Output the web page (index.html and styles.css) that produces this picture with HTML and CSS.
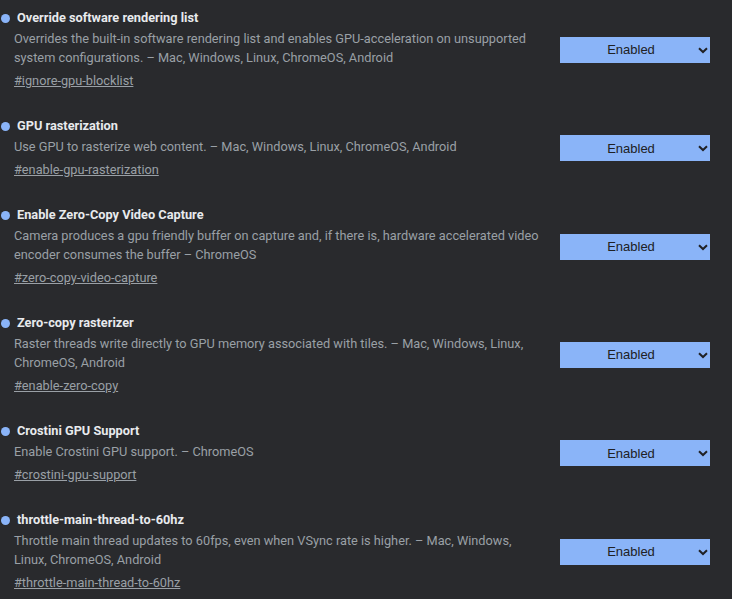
FILE: index.html
```html
<!DOCTYPE html>
<html>
<head>
<meta charset="utf-8">
<link rel="stylesheet" href="styles.css">
</head>
<body>
<div class="list">
  <div class="experiment">
    <div class="info">
      <h3 class="name"><span class="dot"></span>Override software rendering list</h3>
      <p class="desc">Overrides the built-in software rendering list and enables GPU-acceleration on unsupported system configurations. – Mac, Windows, Linux, ChromeOS, Android</p>
      <a class="link" href="#ignore-gpu-blocklist">#ignore-gpu-blocklist</a>
    </div>
    <div class="control"><select class="select"><option>Enabled</option></select><svg class="chev" width="10" height="7" viewBox="0 0 10 7"><path d="M1 1.2 L5 5 L9 1.2" fill="none" stroke="#202124" stroke-width="2"/></svg></div>
  </div>
  <div class="experiment">
    <div class="info">
      <h3 class="name"><span class="dot"></span>GPU rasterization</h3>
      <p class="desc">Use GPU to rasterize web content. – Mac, Windows, Linux, ChromeOS, Android</p>
      <a class="link" href="#enable-gpu-rasterization">#enable-gpu-rasterization</a>
    </div>
    <div class="control"><select class="select"><option>Enabled</option></select><svg class="chev" width="10" height="7" viewBox="0 0 10 7"><path d="M1 1.2 L5 5 L9 1.2" fill="none" stroke="#202124" stroke-width="2"/></svg></div>
  </div>
  <div class="experiment">
    <div class="info">
      <h3 class="name"><span class="dot"></span>Enable Zero-Copy Video Capture</h3>
      <p class="desc">Camera produces a gpu friendly buffer on capture and, if there is, hardware accelerated video encoder consumes the buffer – ChromeOS</p>
      <a class="link" href="#zero-copy-video-capture">#zero-copy-video-capture</a>
    </div>
    <div class="control"><select class="select"><option>Enabled</option></select><svg class="chev" width="10" height="7" viewBox="0 0 10 7"><path d="M1 1.2 L5 5 L9 1.2" fill="none" stroke="#202124" stroke-width="2"/></svg></div>
  </div>
  <div class="experiment">
    <div class="info">
      <h3 class="name"><span class="dot"></span>Zero-copy rasterizer</h3>
      <p class="desc">Raster threads write directly to GPU memory associated with tiles. – Mac, Windows, Linux, ChromeOS, Android</p>
      <a class="link" href="#enable-zero-copy">#enable-zero-copy</a>
    </div>
    <div class="control"><select class="select"><option>Enabled</option></select><svg class="chev" width="10" height="7" viewBox="0 0 10 7"><path d="M1 1.2 L5 5 L9 1.2" fill="none" stroke="#202124" stroke-width="2"/></svg></div>
  </div>
  <div class="experiment">
    <div class="info">
      <h3 class="name"><span class="dot"></span>Crostini GPU Support</h3>
      <p class="desc">Enable Crostini GPU support. – ChromeOS</p>
      <a class="link" href="#crostini-gpu-support">#crostini-gpu-support</a>
    </div>
    <div class="control"><select class="select"><option>Enabled</option></select><svg class="chev" width="10" height="7" viewBox="0 0 10 7"><path d="M1 1.2 L5 5 L9 1.2" fill="none" stroke="#202124" stroke-width="2"/></svg></div>
  </div>
  <div class="experiment">
    <div class="info">
      <h3 class="name"><span class="dot"></span>throttle-main-thread-to-60hz</h3>
      <p class="desc">Throttle main thread updates to 60fps, even when VSync rate is higher. – Mac, Windows, Linux, ChromeOS, Android</p>
      <a class="link" href="#throttle-main-thread-to-60hz">#throttle-main-thread-to-60hz</a>
    </div>
    <div class="control"><select class="select"><option>Enabled</option></select><svg class="chev" width="10" height="7" viewBox="0 0 10 7"><path d="M1 1.2 L5 5 L9 1.2" fill="none" stroke="#202124" stroke-width="2"/></svg></div>
  </div>
</div>
</body>
</html>
```
FILE: styles.css
```css
html, body {
  margin: 0;
  padding: 0;
  background: #292a2d;
}
body {
  font-family: Roboto, "Liberation Sans", sans-serif;
  font-size: 12.75px;
  color: #9aa0a6;
  overflow: hidden;
}
.list {
  display: flex;
  flex-direction: column;
}
.experiment {
  display: flex;
  align-items: center;
  padding: 8px 22px 18px 14px;
}
.info {
  flex: 1;
  min-width: 0;
  margin-right: 16px;
  display: flex;
  flex-direction: column;
  align-items: flex-start;
}
.name {
  margin: 0;
  font-size: 12.75px;
  font-weight: 700;
  line-height: 20px;
  color: #e8eaed;
  display: flex;
  align-items: center;
}
.dot {
  width: 9px;
  height: 9px;
  border-radius: 50%;
  background: #8ab4f8;
  margin-left: -13px;
  margin-right: 7px;
  flex: none;
}
.desc {
  margin: 1px 0 0;
  line-height: 19px;
}
.link {
  margin-top: 4px;
  line-height: 19px;
  color: #9aa0a6;
  text-decoration: underline;
}
.control {
  position: relative;
  flex: none;
  margin-top: 1px;
}
.select {
  appearance: none;
  -webkit-appearance: none;
  display: block;
  width: 150px;
  height: 26px;
  margin: 0;
  border: none;
  border-radius: 0;
  background: #8ab4f8;
  color: #202124;
  font-family: "Liberation Sans", Arial, sans-serif;
  font-size: 13px;
  text-align: center;
  text-align-last: center;
  padding: 0 8px 0 0;
}
.chev {
  position: absolute;
  right: 2px;
  top: 10px;
  pointer-events: none;
}
```
